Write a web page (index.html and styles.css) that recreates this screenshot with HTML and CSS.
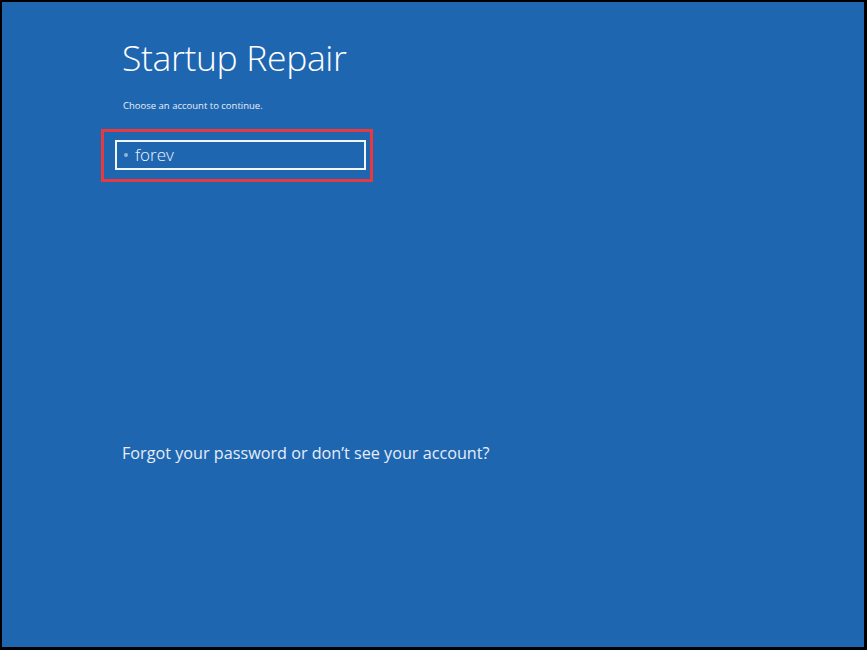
FILE: index.html
```html
<!DOCTYPE html>
<html>
<head>
<meta charset="utf-8">
<link rel="stylesheet" href="styles.css">
</head>
<body>
<div class="screen">
  <div class="content">
    <h1 class="title">Startup Repair</h1>
    <p class="subtitle">Choose an account to continue.</p>
    <div class="highlight">
      <div class="account">
        <span class="dot"></span>
        <span class="name">forev</span>
      </div>
    </div>
    <p class="forgot">Forgot your password or don’t see your account?</p>
  </div>
</div>
</body>
</html>
```
FILE: styles.css
```css
html, body {
  margin: 0;
  padding: 0;
  background: #000;
}
.screen {
  box-sizing: border-box;
  width: 867px;
  height: 650px;
  border-style: solid;
  border-color: #000;
  border-width: 2px 3px 3px 2px;
  background: #1f66b1;
  color: #fff;
  font-family: "Open Sans", "Noto Sans", sans-serif;
}
.content {
  padding-left: 99px;
  padding-top: 30px;
}
.title {
  margin: 0 0 0 21px;
  font-weight: 300;
  font-size: 35.5px;
  line-height: 50px;
  letter-spacing: -0.35px;
}
.subtitle {
  margin: 18px 0 0 22px;
  font-size: 9.5px;
  line-height: 12px;
  color: #e8eef7;
}
.highlight {
  margin-top: 17px;
  width: 266px;
  height: 47px;
  border: 3px solid #e8393f;
  box-sizing: content-box;
}
.account {
  box-sizing: border-box;
  margin: 8px 0 0 11px;
  width: 251px;
  height: 30px;
  border: 2px solid #f2f5fa;
  display: flex;
  align-items: center;
  padding-left: 7px;
}
.dot {
  width: 4px;
  height: 4px;
  border-radius: 50%;
  background: #8fb3db;
  margin-right: 7px;
}
.name {
  font-size: 17px;
  font-weight: 300;
  line-height: 20px;
  color: #eef3fa;
  margin-top: -1px;
}
.forgot {
  margin: 260px 0 0 21px;
  font-size: 16.2px;
  line-height: 22px;
  color: #e6edf7;
}
```
